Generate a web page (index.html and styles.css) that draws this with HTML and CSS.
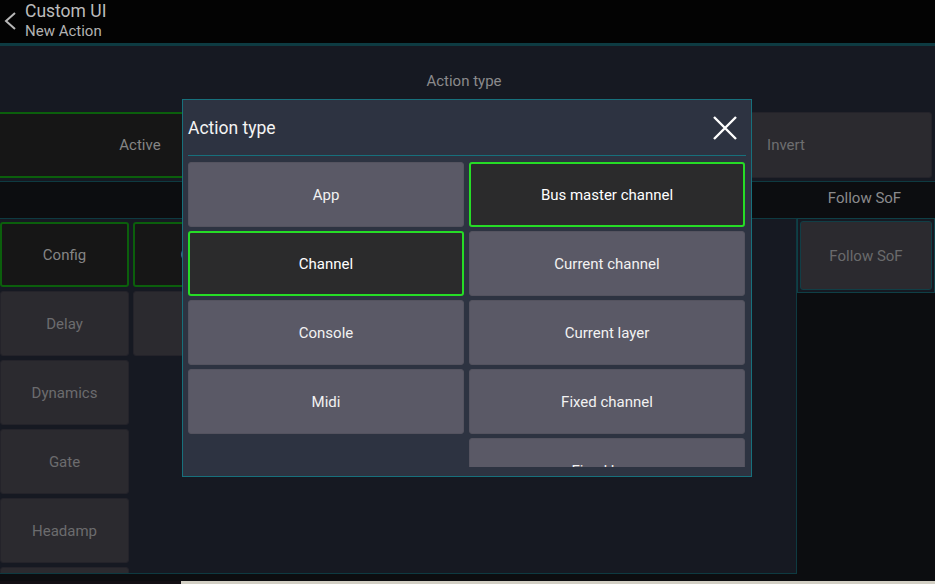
FILE: index.html
```html
<!DOCTYPE html>
<html>
<head>
<meta charset="utf-8">
<link rel="stylesheet" href="styles.css">
</head>
<body>
<div class="screen">
  <header class="topbar">
    <svg class="back" width="14" height="18" viewBox="0 0 14 18"><path d="M12 1 L3 9 L12 17" fill="none" stroke="#b8b8b8" stroke-width="2"/></svg>
    <div class="titles">
      <div class="title">Custom UI</div>
      <div class="subtitle">New Action</div>
    </div>
  </header>

  <section class="type-panel">
    <div class="panel-label">Action type</div>
    <div class="type-row">
      <div class="btn btn-on">Active</div>
      <div class="btn btn-off">Toggle</div>
      <div class="btn btn-off">Invert</div>
    </div>
  </section>

  <div class="lower">
    <div class="col">
      <div class="col-title">Parameters</div>
      <div class="box box-left">
        <div class="param-grid">
          <div class="btn btn-on">Config</div>
          <div class="btn btn-on">Copy</div>
          <div class="btn btn-off">Delay</div>
          <div class="btn btn-off">Eq</div>
          <div class="btn btn-off">Dynamics</div>
          <div class="empty"></div>
          <div class="btn btn-off">Gate</div>
          <div class="empty"></div>
          <div class="btn btn-off">Headamp</div>
          <div class="empty"></div>
          <div class="btn btn-off"></div>
        </div>
      </div>
    </div>
    <div class="col">
      <div class="col-title col-title-right">Follow SoF</div>
      <div class="box box-right">
        <div class="btn btn-off btn-sof">Follow SoF</div>
      </div>
    </div>
  </div>

  <div class="strip"><div class="strip-dark"></div><div class="strip-light"></div></div>

  <div class="modal">
    <div class="modal-head">
      <div class="modal-title">Action type</div>
      <svg class="close" width="26" height="26" viewBox="0 0 26 26"><path d="M2 2 L24 24 M24 2 L2 24" stroke="#ffffff" stroke-width="2.4" fill="none"/></svg>
    </div>
    <div class="modal-rule"></div>
    <div class="modal-body">
      <div class="opt-grid">
        <div class="opt">App</div>
        <div class="opt opt-sel">Bus master channel</div>
        <div class="opt opt-sel">Channel</div>
        <div class="opt">Current channel</div>
        <div class="opt">Console</div>
        <div class="opt">Current layer</div>
        <div class="opt">Midi</div>
        <div class="opt">Fixed channel</div>
        <div class="opt-blank"></div>
        <div class="opt">Fixed layer</div>
      </div>
    </div>
  </div>
</div>
</body>
</html>
```

FILE: styles.css
```css
* { box-sizing: border-box; }
html, body { margin: 0; padding: 0; }
body {
  background: #0c0d10;
  font-family: Roboto, "Liberation Sans", sans-serif;
  overflow: hidden;
}
.screen {
  position: relative;
  width: 935px;
  height: 584px;
  display: flex;
  flex-direction: column;
}
.topbar {
  height: 45px;
  background: #030303;
  border-bottom: 2px solid #0d3b42;
  display: flex;
  align-items: flex-start;
  padding: 0 0 0 3px;
}
.back { margin-top: 12px; margin-right: 8px; }
.titles { display: flex; flex-direction: column; }
.title { color: #bcbcbc; font-size: 17.5px; line-height: 20px; margin-top: 1px; }
.subtitle { color: #b2b2b2; font-size: 15px; line-height: 18px; margin-top: 1px; }

.type-panel {
  height: 137px;
  background: #161922;
  border-top: 1px solid #0e3a41;
  border-bottom: 1px solid #0e3a41;
  display: flex;
  flex-direction: column;
}
.panel-label {
  height: 66px;
  display: flex;
  align-items: center;
  justify-content: center;
  color: #8a8a8c;
  font-size: 15px;
  padding-top: 3px;
  padding-right: 7px;
}
.type-row {
  display: grid;
  grid-template-columns: 282px 1fr 292px;
  gap: 4px;
  padding-right: 3px;
  height: 66px;
}
.btn {
  display: flex;
  align-items: center;
  justify-content: center;
  font-size: 15px;
  border-radius: 3px;
}
.btn-on {
  background: #161616;
  border: 2px solid #0b5f0c;
  color: #858585;
}
.type-row .btn-on { border-left: none; border-radius: 0 3px 3px 0; }
.btn-off {
  background: #2b2a2f;
  border: 1px solid #24232a;
  color: #6e6e70;
}
.lower {
  display: grid;
  grid-template-columns: 797px 1fr;
  height: 392px;
}
.col { display: flex; flex-direction: column; }
.col-title {
  height: 36px;
  display: flex;
  align-items: center;
  justify-content: center;
  color: #8a8a8c;
  font-size: 15px;
}
.col-title-right { padding-bottom: 4px; padding-right: 3px; }
.box {
  background: #161922;
  border: 1px solid #0e3a41;
  overflow: hidden;
}
.box-left {
  height: 356px;
  border-left: none;
  padding: 3px 0 0 0;
}
.param-grid {
  display: grid;
  grid-template-columns: 129px 129px;
  grid-auto-rows: 65px;
  column-gap: 4px;
  row-gap: 4px;
}
.param-grid .btn-off { color: #6c6c6e; }
.box-right {
  height: 75px;
  padding: 2px;
  background: #161922;
  border-color: #0f3f46;
}
.btn-sof {
  height: 69px;
  border: 1px solid #113e46;
  color: #6a6a6c;
}
.strip {
  margin-top: auto;
  height: 3px;
  display: grid;
  grid-template-columns: 181px 1fr;
}
.strip-dark { background: #130f14; }
.strip-light { background: #d2cfc4; }

.modal {
  position: absolute;
  left: 182px;
  top: 99px;
  width: 570px;
  height: 378px;
  background: #2d3341;
  border: 1px solid #17707c;
  display: flex;
  flex-direction: column;
  padding: 0 5px;
}
.modal-head {
  height: 55px;
  display: flex;
  align-items: center;
  justify-content: space-between;
}
.modal-title {
  color: #f4f4f4;
  font-size: 17.5px;
  padding-top: 0;
}
.close { margin-right: 8px; }
.modal-rule {
  height: 1px;
  background: #17707c;
}
.modal-body {
  height: 311px;
  overflow: hidden;
  padding-top: 6px;
}
.opt-grid {
  display: grid;
  grid-template-columns: 276px 276px;
  grid-auto-rows: 65px;
  column-gap: 5px;
  row-gap: 4px;
}
.opt {
  background: #5a5966;
  border: 1px solid #54535f;
  border-radius: 3px;
  color: #f2f2f2;
  font-size: 15px;
  display: flex;
  align-items: center;
  justify-content: center;
}
.opt-sel {
  background: #2b2b2c;
  border: 2px solid #26dc26;
  color: #ffffff;
}
```
